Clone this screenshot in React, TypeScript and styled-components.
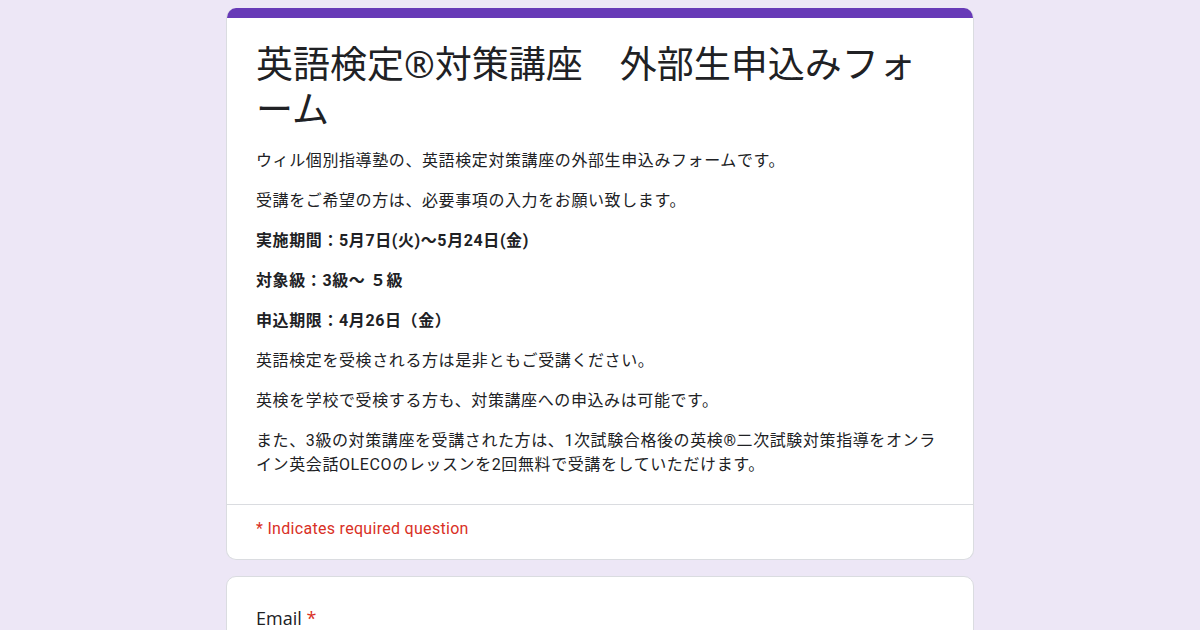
import styled, { createGlobalStyle } from "styled-components";

const GlobalStyle = createGlobalStyle`
  body {
    margin: 0;
    background-color: #ede7f6;
    font-family: Roboto, "Noto Sans CJK JP", sans-serif;
    color: #202124;
  }
`;

const PageContainer = styled.main`
  display: flex;
  flex-direction: column;
  align-items: center;
  gap: 16px;
  padding-top: 8px;
  min-height: 622px;
`;

const Card = styled.section`
  width: 748px;
  box-sizing: border-box;
  background-color: #fff;
  border: 1px solid #dadce0;
  border-radius: 10px;
  overflow: hidden;
`;

const HeaderCard = styled(Card)`
  border-top: none;
`;

const Stripe = styled.div`
  height: 10px;
  background-color: #673ab7;
`;

const HeaderBody = styled.div`
  padding: 23px 30px 27px 29px;
`;

const Title = styled.h1`
  margin: 0 0 18px;
  font-family: "Open Sans", "Noto Sans CJK JP", sans-serif;
  font-weight: 400;
  font-size: 37px;
  line-height: 45px;
  color: #202124;
`;

const Description = styled.div`
  font-size: 16px;
  line-height: 24px;
  letter-spacing: 0.6px;
`;

const Para = styled.p<{ $bold?: boolean }>`
  margin: 0 0 16px;
  font-weight: ${(p) => (p.$bold ? 700 : 400)};
  &:last-child {
    margin-bottom: 0;
  }
`;

const Divider = styled.div`
  border-top: 1px solid #dadce0;
`;

const RequiredNote = styled.div`
  padding: 14px 29px 20px;
  font-size: 16px;
  line-height: 20px;
  letter-spacing: 0.3px;
  color: #d93025;
`;

const QuestionCard = styled(Card)`
  padding: 28px 29px;
`;

const QuestionTitle = styled.div`
  font-family: "Open Sans", Roboto, sans-serif;
  font-size: 18px;
  line-height: 26px;
`;

const Star = styled.span`
  color: #d93025;
`;

const App = () => {
  return (
    <>
      <GlobalStyle />
      <PageContainer>
        <HeaderCard>
          <Stripe />
          <HeaderBody>
            <Title>英語検定®対策講座　外部生申込みフォーム</Title>
            <Description>
              <Para>ウィル個別指導塾の、英語検定対策講座の外部生申込みフォームです。</Para>
              <Para>受講をご希望の方は、必要事項の入力をお願い致します。</Para>
              <Para $bold>実施期間：5月7日(火)〜5月24日(金)</Para>
              <Para $bold>対象級：3級〜 ５級</Para>
              <Para $bold>申込期限：4月26日（金）</Para>
              <Para>英語検定を受検される方は是非ともご受講ください。</Para>
              <Para>英検を学校で受検する方も、対策講座への申込みは可能です。</Para>
              <Para>
                また、3級の対策講座を受講された方は、1次試験合格後の英検®二次試験対策指導をオンライン英会話OLECOのレッスンを2回無料で受講をしていただけます。
              </Para>
            </Description>
          </HeaderBody>
          <Divider />
          <RequiredNote>* Indicates required question</RequiredNote>
        </HeaderCard>

        <QuestionCard>
          <QuestionTitle>
            Email <Star>*</Star>
          </QuestionTitle>
        </QuestionCard>
      </PageContainer>
    </>
  );
};

export default App;
